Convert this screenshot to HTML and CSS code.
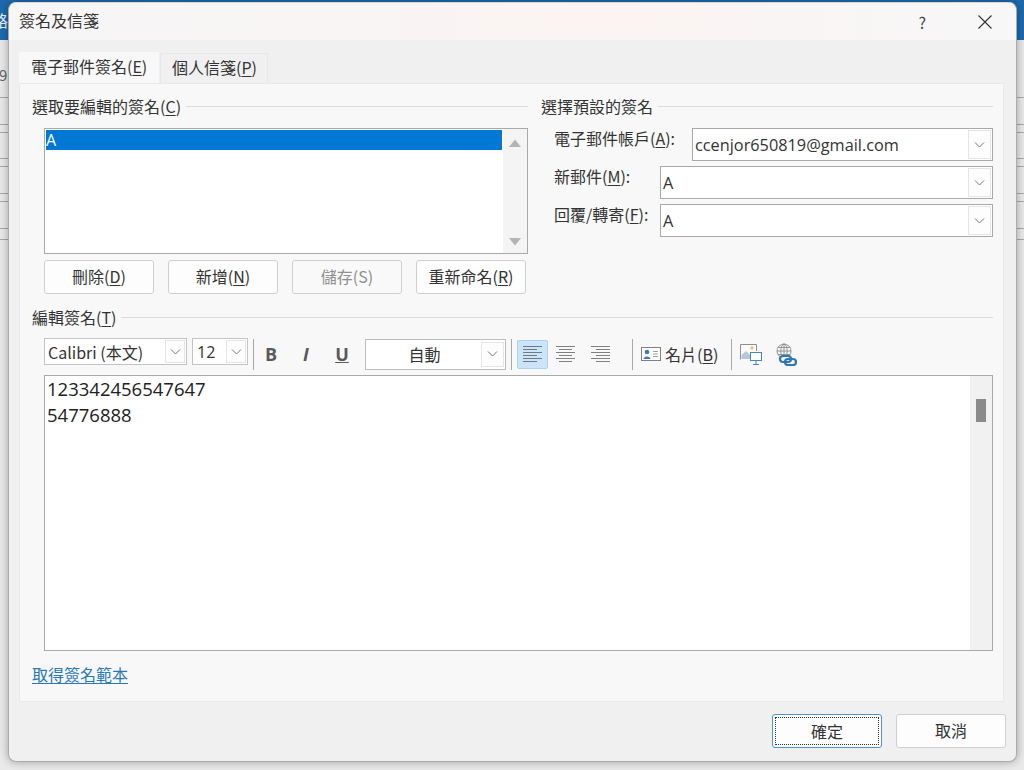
FILE: index.html
```html
<!DOCTYPE html>
<html lang="zh-Hant">
<head>
<meta charset="utf-8">
<title>簽名及信箋</title>
<link rel="stylesheet" href="styles.css">
</head>
<body>
<div class="backdrop">
  <div class="back-blue"></div>
  <div class="back-rows">
    <i class="r1"></i><i class="r2"></i><i class="r3"></i><i class="r4"></i><i class="r5"></i><i class="r6"></i><i class="r7"></i><i class="r8"></i><i class="r9"></i>
  </div>
</div>
<span class="back-text">路</span>
<span class="back-mail">9(</span>
<main class="dialog">
  <header class="titlebar">
    <span class="title">簽名及信箋</span>
    <span class="help">?</span>
    <svg class="close" width="14" height="14" viewBox="0 0 14 14"><path d="M0.5 0.5 13.5 13.5M13.5 0.5 0.5 13.5" stroke="#333" stroke-width="1.1" fill="none"/></svg>
  </header>
  <nav class="tabs">
    <div class="tab active">電子郵件簽名(<u>E</u>)</div>
    <div class="tab">個人信箋(<u>P</u>)</div>
  </nav>
  <section class="panel">
    <div class="top">
      <div class="col-left">
        <div class="legend"><span>選取要編輯的簽名(<u>C</u>)</span><hr></div>
        <div class="listbox">
          <div class="list-items"><div class="list-sel">A</div></div>
          <div class="list-scroll">
            <svg width="12" height="8" viewBox="0 0 12 8"><path d="M6 0.5 12 8H0Z" fill="#b4b4b4"/></svg>
            <svg width="12" height="8" viewBox="0 0 12 8"><path d="M6 7.5 12 0H0Z" fill="#b4b4b4"/></svg>
          </div>
        </div>
        <div class="btn-row">
          <button class="btn">刪除(<u>D</u>)</button>
          <button class="btn">新增(<u>N</u>)</button>
          <button class="btn disabled">儲存(S)</button>
          <button class="btn">重新命名(<u>R</u>)</button>
        </div>
      </div>
      <div class="col-right">
        <div class="legend"><span>選擇預設的簽名</span><hr></div>
        <div class="form-rows">
          <div class="form-row">
            <label class="lbl-wide">電子郵件帳戶(<u>A</u>):</label>
            <div class="combo tall"><span class="combo-val">ccenjor650819@gmail.com</span><span class="combo-btn"><svg width="11" height="6" viewBox="0 0 11 6"><path d="M1 0.5 5.5 5 10 0.5" fill="none" stroke="#777"/></svg></span></div>
          </div>
          <div class="form-row">
            <label class="lbl">新郵件(<u>M</u>):</label>
            <div class="combo tall"><span class="combo-val">A</span><span class="combo-btn"><svg width="11" height="6" viewBox="0 0 11 6"><path d="M1 0.5 5.5 5 10 0.5" fill="none" stroke="#777"/></svg></span></div>
          </div>
          <div class="form-row">
            <label class="lbl">回覆/轉寄(<u>F</u>):</label>
            <div class="combo tall"><span class="combo-val">A</span><span class="combo-btn"><svg width="11" height="6" viewBox="0 0 11 6"><path d="M1 0.5 5.5 5 10 0.5" fill="none" stroke="#777"/></svg></span></div>
          </div>
        </div>
      </div>
    </div>
    <div class="legend legend-edit"><span>編輯簽名(<u>T</u>)</span><hr></div>
    <div class="toolbar">
      <div class="combo small font"><span class="combo-val">Calibri (本文)</span><span class="combo-btn"><svg width="11" height="6" viewBox="0 0 11 6"><path d="M1 0.5 5.5 5 10 0.5" fill="none" stroke="#777"/></svg></span></div>
      <div class="combo small size"><span class="combo-val">12</span><span class="combo-btn"><svg width="11" height="6" viewBox="0 0 11 6"><path d="M1 0.5 5.5 5 10 0.5" fill="none" stroke="#777"/></svg></span></div>
      <i class="sep"></i>
      <span class="fmt bold">B</span>
      <span class="fmt italic">I</span>
      <span class="fmt under">U</span>
      <div class="combo color"><span class="combo-val center">自動</span><span class="combo-btn"><svg width="11" height="6" viewBox="0 0 11 6"><path d="M1 0.5 5.5 5 10 0.5" fill="none" stroke="#777"/></svg></span></div>
      <i class="sep sep-a"></i>
      <span class="align on"><svg width="19" height="19" viewBox="0 0 19 19"><path d="M0 1.5H19M0 4.5H14M0 7.5H19M0 10.5H14M0 13.5H19M0 16.5H14" stroke="#6e7a86"/></svg></span>
      <span class="align mid"><svg width="19" height="19" viewBox="0 0 19 19"><path d="M0 1.5H19M3 4.5H16M0 7.5H19M3 10.5H16M0 13.5H19M3 16.5H16" stroke="#808080"/></svg></span>
      <span class="align end"><svg width="19" height="19" viewBox="0 0 19 19"><path d="M0 1.5H19M5 4.5H19M0 7.5H19M5 10.5H19M0 13.5H19M5 16.5H19" stroke="#808080"/></svg></span>
      <i class="sep sep-b"></i>
      <svg class="card-ico" width="20" height="14" viewBox="0 0 20 14"><rect x=".5" y=".5" width="19" height="13" fill="#fff" stroke="#808080"/><circle cx="6" cy="5" r="2.3" fill="#3f78ad"/><path d="M2.5 12C2.5 8.5 9.500 8.500 9.500 12Z" fill="#3f78ad"/><path d="M12 4.500H17M12 7H17M12 9.500H17" stroke="#a0a0a0"/></svg>
      <span class="card-text">名片(<u>B</u>)</span>
      <i class="sep sep-c"></i>
      <svg class="pic-ico" width="22" height="21" viewBox="0 0 22 21"><rect x=".5" y=".5" width="16" height="15" fill="#fbfbfb"/><path d="M.5 15.500V.5H16.500V7" fill="none" stroke="#909090"/><circle cx="12" cy="4" r="1.700" fill="#eec36a"/><path d="M1.500 15V11L6 7 10 11V15Z" fill="#b4c8dc"/><rect x="10.500" y="8.500" width="11" height="8" fill="#fff" stroke="#4b84b5"/><path d="M16 17V20M13 20.500H19" stroke="#4b84b5"/></svg>
      <svg class="link-ico" width="21" height="23" viewBox="0 0 21 23"><g fill="none" stroke="#8a8a8a" stroke-width=".9"><circle cx="8" cy="8" r="7"/><ellipse cx="8" cy="8" rx="3.200" ry="7"/><path d="M1 8H15M2 4.500H14M2 11.500H14M8 1V15"/></g><g fill="none" stroke="#2f77b4" stroke-width="2.200"><rect x="4" y="13" width="11" height="6" rx="3" fill="#f5f5f5"/><rect x="9" y="16" width="11" height="6" rx="3"/></g></svg>
    </div>
    <div class="editor">
      <div class="editor-text">
        <div>123342456547647</div>
        <div>54776888</div>
      </div>
      <div class="editor-scroll"><i class="thumb"></i></div>
    </div>
    <a class="tpl-link">取得簽名範本</a>
  </section>
  <footer class="footer">
    <button class="btn ok"><span class="focus">確定</span></button>
    <button class="btn cancel">取消</button>
  </footer>
</main>
</body>
</html>
```

FILE: styles.css
```css
* { box-sizing: border-box; }
html, body { margin: 0; padding: 0; }
body {
  width: 1024px;
  height: 770px;
  overflow: hidden;
  position: relative;
  background: #e4e4e4;
  font-family: "Noto Sans CJK TC", "Noto Sans", sans-serif;
  font-size: 16px;
  color: #333;
}
u { text-underline-offset: 2px; text-decoration-thickness: 1px; }
.backdrop { position: absolute; inset: 0; }
.back-blue { height: 40px; background: #1c6aad; }
.back-rows { position: relative; height: 730px; background: #e9e9e9; }
.back-rows i { position: absolute; left: 0; right: 0; height: 1px; background: #a8a8a8; }
.back-rows .r1 { top: 57px; }
.back-rows .r2 { top: 84px; }
.back-rows .r3 { top: 92px; }
.back-rows .r4 { top: 118px; }
.back-rows .r5 { top: 126px; }
.back-rows .r6 { top: 153px; }
.back-rows .r7 { top: 161px; }
.back-rows .r8 { top: 188px; }
.back-rows .r9 { top: 199px; }
.back-text { position: absolute; left: -8px; top: 8px; color: #e8f0f8; font-size: 16px; line-height: 24px; }
.back-mail { position: absolute; left: -1px; top: 64px; color: #666; font-size: 15px; line-height: 22px; }
.dialog {
  position: absolute;
  left: 8px;
  top: 2px;
  width: 1009px;
  height: 760px;
  background: #f0f0f0;
  border: 1px solid #ababab;
  border-top-color: #d8d8d8;
  border-radius: 8px;
  box-shadow: 0 0 9px rgba(0,0,0,.32);
  display: flex;
  flex-direction: column;
  overflow: hidden;
}
.titlebar {
  height: 37px;
  flex: none;
  display: flex;
  align-items: center;
  background: linear-gradient(90deg, #f6f6f6, #fbf4f3 60%, #f7f7f7);
  padding: 0 24px 0 10px;
}
.title { flex: 1; position: relative; top: -2px; }
.help { margin-right: 52px; color: #444; }
.close { flex: none; }
.tabs { height: 43px; flex: none; display: flex; align-items: flex-end; padding-left: 9px; }
.tab {
  height: 30px;
  padding: 1px 11px 0;
  width: 108px;
  white-space: nowrap;
  background: #f0f0f0;
  border: 1px solid #e8e8e8;
  border-bottom: 0;
}
.tab.active { width: 142px; height: 32px; padding: 2px 12px 0; background: #f8f8f8; border-color: #f0f0f0; }
.panel {
  flex: none;
  margin-left: 10px;
  width: 985px;
  height: 619px;
  background: #f8f8f8;
  border: 1px solid #e9e9e9;
  padding: 9px 10px 0 12px;
  display: flex;
  flex-direction: column;
}
.top { display: flex; height: 211px; flex: none; }
.col-left { width: 496px; flex: none; }
.col-right { margin-left: 13px; flex: 1; }
.legend { height: 24px; display: flex; align-items: center; gap: 5px; padding-top: 2px; white-space: nowrap; }
.legend hr { flex: 1; height: 1px; border: 0; background: #dcdcdc; margin: 0; }
.listbox {
  margin: 11px 0 0 12px;
  width: 484px;
  height: 126px;
  background: #fff;
  border: 1px solid #a9a9a9;
  display: flex;
}
.list-items { flex: 1; padding: 1px; }
.list-sel { height: 20px; background: #0078d4; color: #fff; line-height: 20px; font-family: "Open Sans", sans-serif; font-size: 16px; }
.list-scroll { width: 24px; flex: none; display: flex; flex-direction: column; justify-content: space-between; align-items: center; padding: 10px 0 7px; background: #f4f4f4; }
.btn-row { display: flex; gap: 14px; margin: 6px 0 0 12px; }
.btn {
  width: 110px;
  height: 34px;
  padding: 0 0 3px;
  background: #fdfdfd;
  border: 1px solid #d0d0d0;
  border-radius: 3px;
  font: inherit;
  color: #333;
}
.btn.disabled { color: #8f8f8f; background: #f9f9f9; }
.form-rows { margin-top: 11px; display: flex; flex-direction: column; gap: 5px; padding-left: 13px; }
.form-row { display: flex; height: 33px; justify-content: space-between; }
.form-row label { line-height: 20px; white-space: nowrap; }
.combo {
  display: flex;
  align-items: center;
  background: #fff;
  border: 1px solid #a9a9a9;
  padding-left: 2px;
  font-family: "Open Sans", sans-serif;
}
.combo.tall { height: 33px; flex: none; width: 333px; font-size: 16.300px; }
.form-row:first-child .combo { width: 301px; }
.combo-val { flex: 1; white-space: nowrap; overflow: hidden; }
.combo-btn {
  flex: none;
  width: 23px;
  height: 100%;
  margin-right: 1px;
  border: 1px solid #e5e5e5;
  background: #fdfdfd;
  display: flex;
  align-items: center;
  justify-content: center;
}
.combo.tall .combo-btn { height: 29px; }
.toolbar { margin: 10px 0 0 12px; height: 32px; display: flex; align-items: center; flex: none; }
.combo.small { height: 27px; align-self: flex-start; border-color: #c4c4c4; font-size: 16px; padding-left: 3px; }
.combo.font { width: 143px; font-family: "Noto Sans CJK TC", sans-serif; }
.combo.size { width: 56px; margin-left: 5px; padding-left: 4px; }
.combo.small .combo-btn { width: 20px; height: 23px; }
.sep { width: 1px; height: 31px; background: #a8a8a8; flex: none; margin-left: 5px; }
.fmt { width: 24px; text-align: center; font-family: "Open Sans", sans-serif; font-size: 18px; color: #5a5a5a; font-weight: 700; }
.fmt.bold { margin-left: 5px; }
.fmt.italic { font-style: italic; margin-left: 11px; }
.fmt.under { text-decoration: underline; margin-left: 12px; }
.combo.color { width: 141px; height: 31px; margin-left: 11px; border-color: #bdbdbd; font-family: "Noto Sans CJK TC", sans-serif; font-size: 16px; }
.combo.color .combo-btn { width: 23px; height: 25px; margin-right: 1px; }
.center { text-align: center; }
.align { width: 31px; height: 29px; display: flex; align-items: center; justify-content: center; margin-left: 5px; flex: none; }
.align.on { background: #cce4f7; border: 1px solid #a8d2f0; border-radius: 2px; }
.align.mid { margin-left: 2px; }
.align.end { margin-left: 4px; }
.sep-b { margin-left: 16px; }
.card-ico { margin-left: 8px; flex: none; }
.card-text { margin-left: 4px; white-space: nowrap; }
.sep-c { margin-left: 13px; }
.pic-ico { margin-left: 8px; flex: none; }
.link-ico { margin-left: 14px; flex: none; }
.editor {
  margin: 5px 0 0 12px;
  width: 949px;
  height: 276px;
  flex: none;
  background: #fff;
  border: 1px solid #a9a9a9;
  display: flex;
}
.editor-text { flex: 1; padding: 0 2px; font-family: "Open Sans", sans-serif; font-size: 18.500px; line-height: 26px; color: #222; }
.editor-scroll { width: 22px; flex: none; background: #f1f1f1; padding: 23px 0 0 6px; }
.thumb { display: block; width: 10px; height: 23px; background: #8a8a8a; }
.tpl-link { margin-top: 11px; color: #2a78b8; text-decoration: underline; text-underline-offset: 2px; align-self: flex-start; }
.footer { flex: 1; display: flex; justify-content: flex-end; align-items: flex-start; gap: 14px; padding: 12px 10px 0 0; }
.ok, .cancel { margin: 0; }
.ok { border: 1px solid #4f93c9; border-radius: 3px; padding: 2px; }
.focus { display: flex; width: 100%; height: 100%; align-items: center; justify-content: center; border: 1px dotted #333; }
```
